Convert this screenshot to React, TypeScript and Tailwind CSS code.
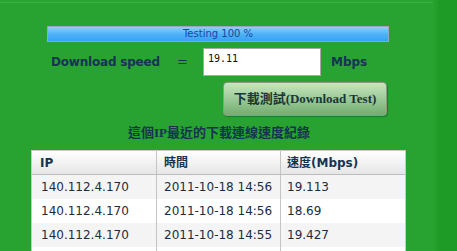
export default function App() {
  const rows = [
    { ip: "140.112.4.170", time: "2011-10-18 14:56", speed: "19.113", bg: "bg-[#f4f4f4]" },
    { ip: "140.112.4.170", time: "2011-10-18 14:56", speed: "18.69", bg: "bg-white" },
    { ip: "140.112.4.170", time: "2011-10-18 14:55", speed: "19.427", bg: "bg-[#f4f4f4]" },
    { ip: "", time: "", speed: "", bg: "bg-white" },
  ];

  return (
    <div className="w-[457px] h-[251px] overflow-hidden flex bg-[#28a331]" style={{ fontFamily: '"DejaVu Sans", Verdana, sans-serif' }}>
      {/* main panel */}
      <div className="w-[433px] shrink-0">
        <div className="h-[2px]" />
        <div className="h-px bg-[#3cb043]" />

        {/* progress bar */}
        <div className="ml-[47px] mt-[23px] w-[342px] h-[16px] border border-[#9aa3c4] bg-gradient-to-b from-[#8ad0ff] via-[#4fb2f8] to-[#36a2f2] flex items-center justify-center">
          <span className="text-[10px] leading-none text-[#1d45a0]">Testing 100 %</span>
        </div>

        {/* speed row */}
        <div className="flex items-center mt-[6px] h-[28px]">
          <span className="ml-[51px] w-[126px] text-[12px] tracking-[-0.2px] font-bold text-[#163452] whitespace-nowrap">Download speed</span>
          <span className="w-[26px] text-[13px] text-[#163452]">=</span>
          <div className="w-[118px] h-[28px] bg-white border border-[#a8a8a8] pl-[4px] pt-[5px] text-[10px] leading-none text-[#111]" style={{ fontFamily: '"DejaVu Sans Mono", monospace' }}>
            19.11
          </div>
          <span className="ml-[10px] text-[12px] font-bold text-[#163452]">Mbps</span>
        </div>

        {/* button */}
        <div className="ml-[223px] mt-[6px] w-[164px] h-[34px] rounded-[4px] border border-[#8a9c88] bg-gradient-to-b from-[#c6e6bf] to-[#73ad70] shadow-[1px_1px_1px_rgba(0,0,0,0.25)] flex items-center justify-center">
          <span className="text-[13px] font-bold text-[#173838]" style={{ fontFamily: '"Liberation Serif", "Noto Sans CJK TC", serif' }}>
            下載測試(Download Test)
          </span>
        </div>

        {/* title */}
        <div className="mt-[9px] ml-[128px] text-[13px] leading-[16px] font-bold text-[#163452]" style={{ fontFamily: '"Liberation Serif", "Noto Sans CJK TC", serif' }}>
          這個IP最近的下載連線速度紀錄
        </div>

        {/* table */}
        <div className="ml-[31px] mt-[9px] w-[375px] border border-[#c8c8c8] border-b-0 bg-white">
          <div className="grid grid-cols-[125px_124px_124px] h-[24px] bg-gradient-to-b from-white to-[#e6e6e6] border-b border-[#bdbdbd] text-[12px] font-bold text-[#163452]">
            <div className="pl-[8px] flex items-center border-r border-[#c4c4c4]">IP</div>
            <div className="pl-[7px] flex items-center border-r border-[#c4c4c4]" style={{ fontFamily: '"DejaVu Sans", "Noto Sans CJK TC", sans-serif' }}>時間</div>
            <div className="pl-[6px] flex items-center" style={{ fontFamily: '"DejaVu Sans", "Noto Sans CJK TC", sans-serif' }}>速度(Mbps)</div>
          </div>
          {rows.map((r, i) => (
            <div key={i} className={`grid grid-cols-[125px_124px_124px] h-[24px] text-[12px] text-[#1a2c44] ${r.bg}`}>
              <div className="pl-[9px] flex items-center border-r border-[#c4c4c4]">{r.ip}</div>
              <div className="pl-[7px] flex items-center border-r border-[#c4c4c4] whitespace-nowrap">{r.time}</div>
              <div className="pl-[6px] flex items-center">{r.speed}</div>
            </div>
          ))}
        </div>
      </div>

      {/* darker right strip */}
      <div className="w-[5px] shrink-0 bg-gradient-to-r from-[#28a331] to-[#209c29]" />
      <div className="flex-1 bg-[#1e9a27]" />
    </div>
  );
}
